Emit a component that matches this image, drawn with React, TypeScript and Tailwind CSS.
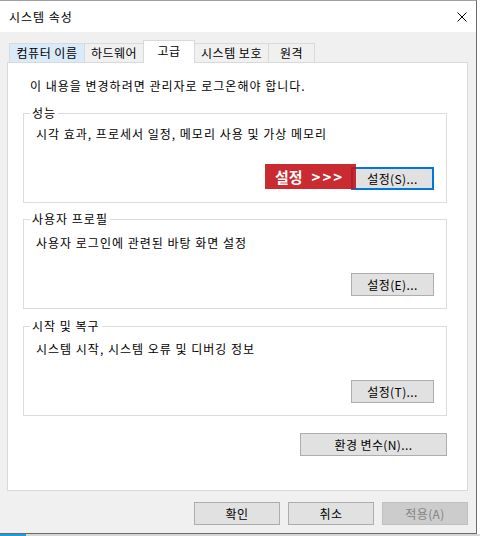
import { ReactNode } from "react"

const Button = ({ children, className = "" }: { children: ReactNode; className?: string }) => (
  <button className={"h-[23px] flex items-center justify-center text-[12px] leading-none tracking-[0.4px] " + className}>{children}</button>
)

const Group = ({ title, text, pt, children, className = "" }: { title: string; text: string; pt: string; children: ReactNode; className?: string }) => (
  <div className={"relative w-[424px] h-[90px] border border-[#dcdcdc] flex flex-col " + className}>
    <span className="absolute -top-[9px] left-[6px] bg-white px-[2px] leading-[16px] tracking-[1px]">{title}</span>
    <p className={"pl-[12px] leading-[16px] tracking-[1px] " + pt}>{text}</p>
    <div className="relative mt-auto mb-[12px] mr-[12px] flex justify-end">{children}</div>
  </div>
)

const tabs = [
  { label: "컴퓨터 이름", w: "w-[76px]", cls: "bg-[#d9eaf9]" },
  { label: "하드웨어", w: "w-[60px] -ml-px", cls: "bg-[#f0f0f0]" },
  { label: "고급", w: "w-[52px] -ml-px", cls: "active" },
  { label: "시스템 보호", w: "w-[75px] -ml-px", cls: "bg-[#f0f0f0]" },
  { label: "원격", w: "w-[47px] -ml-px", cls: "bg-[#f0f0f0]" },
]

export default function App() {
  return (
    <div className="w-[480px] h-[536px] bg-white font-['Noto_Sans_CJK_KR',sans-serif] text-[12px] text-black">
      <div className="w-[477px] h-[534px] flex flex-col border-t border-t-[#a0a0a0] border-r border-b border-[#6b6b6b]">
        {/* title bar */}
        <div className="h-[31px] bg-white flex items-center justify-between pl-[9px] pr-[9px]">
          <span className="text-[12px] leading-[16px] pt-[1px] tracking-[1px]">시스템 속성</span>
          <svg width="10" height="10" viewBox="0 0 10 10" className="mt-[1px]">
            <path d="M0.5 0.5 L9.5 9.5 M9.5 0.5 L0.5 9.5" stroke="#000" strokeWidth="1" />
          </svg>
        </div>

        <div className="flex-1 bg-[#f0f0f0] pl-[7px] pt-[8px] flex flex-col">
          {/* tabs */}
          <div className="flex items-end h-[22px] ml-[2px]">
            {tabs.map((t) =>
              t.cls === "active" ? (
                <div key={t.label} className={"relative z-10 h-[23px] -mb-px bg-white border border-b-0 border-[#d9d9d9] flex items-center justify-center pb-[2px] tracking-[0.5px] " + t.w}>
                  {t.label}
                </div>
              ) : (
                <div key={t.label} className={"h-[19px] border border-b-0 border-[#d9d9d9] flex items-center justify-center tracking-[0.5px] " + t.w + " " + t.cls}>
                  {t.label}
                </div>
              )
            )}
          </div>

          {/* panel */}
          <div className="w-[461px] h-[429px] bg-white border border-[#d9d9d9] pl-[15px] flex flex-col">
            <p className="pl-[7px] pt-[15px] leading-[16px] tracking-[1px]">이 내용을 변경하려면 관리자로 로그온해야 합니다.</p>

            <Group title="성능" text="시각 효과, 프로세서 일정, 메모리 사용 및 가상 메모리" pt="pt-[12px]" className="mt-[19px]">
              <div className="absolute right-[78px] -top-[3px] z-10 w-[91px] h-[25px] bg-[#c3141b]/90 text-white font-bold text-[15px] flex items-center pl-[10px] gap-[9px] leading-none">
                <span>설정</span>
                <span className="tracking-[2px]">&gt;&gt;&gt;</span>
              </div>
              <Button className="w-[83px] border-2 border-[#0078d7] bg-[#e1e1e1]">설정(S)...</Button>
            </Group>

            <Group title="사용자 프로필" text="사용자 로그인에 관련된 바탕 화면 설정" pt="pt-[15px]" className="mt-[16px]">
              <Button className="w-[83px] border border-[#adadad] bg-[#e1e1e1]">설정(E)...</Button>
            </Group>

            <Group title="시작 및 복구" text="시스템 시작, 시스템 오류 및 디버깅 정보" pt="pt-[14px]" className="mt-[17px]">
              <Button className="w-[83px] border border-[#adadad] bg-[#e1e1e1]">설정(T)...</Button>
            </Group>

            <div className="w-[424px] flex justify-end mt-[17px]">
              <Button className="w-[147px] border border-[#adadad] bg-[#e1e1e1]">환경 변수(N)...</Button>
            </div>
          </div>

          {/* footer buttons */}
          <div className="w-[461px] flex justify-end gap-[8px] mt-[11px]">
            <Button className="w-[86px] border border-[#adadad] bg-[#e1e1e1]">확인</Button>
            <Button className="w-[86px] border border-[#adadad] bg-[#e1e1e1]">취소</Button>
            <Button className="w-[86px] border border-[#bfbfbf] bg-[#cccccc] text-[#838383]">적용(A)</Button>
          </div>
        </div>
      </div>
      <div className="flex h-[2px]">
        <div className="w-[26px] bg-[#1a9be6]" />
        <div className="flex-1 bg-[#d6d6d6]" />
      </div>
    </div>
  )
}
